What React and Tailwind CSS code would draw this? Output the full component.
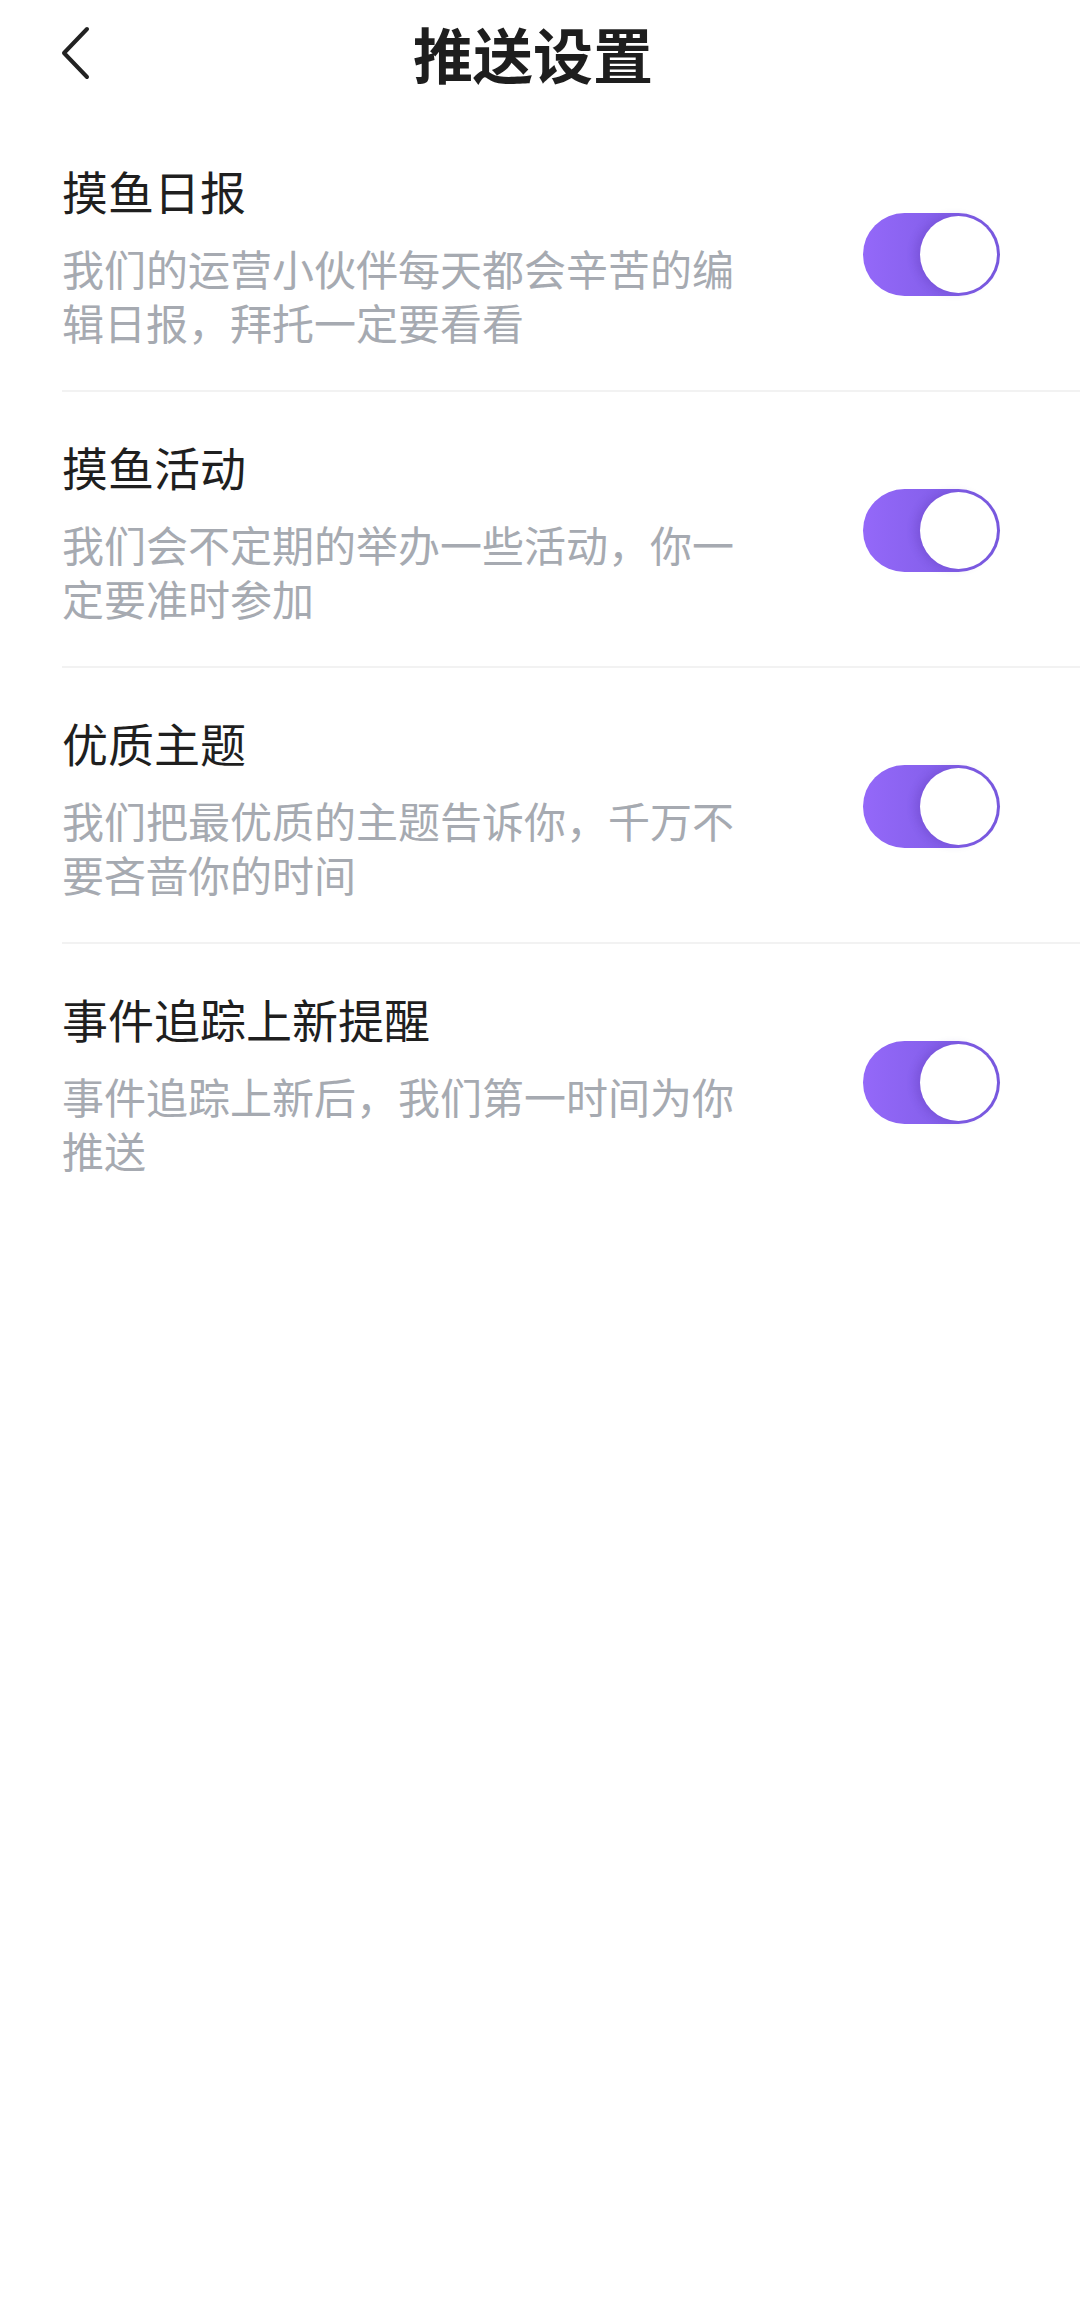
import { useState } from "react";

const items = [
  {
    id: "daily",
    title: "摸鱼日报",
    desc: "我们的运营小伙伴每天都会辛苦的编辑日报，拜托一定要看看",
  },
  {
    id: "events",
    title: "摸鱼活动",
    desc: "我们会不定期的举办一些活动，你一定要准时参加",
  },
  {
    id: "topics",
    title: "优质主题",
    desc: "我们把最优质的主题告诉你，千万不要吝啬你的时间",
  },
  {
    id: "tracking",
    title: "事件追踪上新提醒",
    desc: "事件追踪上新后，我们第一时间为你推送",
  },
];

function Toggle({ on, onChange }) {
  return (
    <button
      type="button"
      onClick={onChange}
      className={`flex items-center w-[137px] h-[83px] rounded-full p-[3px] shrink-0 transition ${
        on
          ? "bg-gradient-to-r from-[#9468f9] to-[#7859df] justify-end"
          : "bg-[#e5e7eb] justify-start"
      }`}
    >
      <span className="block w-[77px] h-[77px] rounded-full bg-white shadow-[-5px_0_8px_rgba(60,30,140,0.18)]" />
    </button>
  );
}

export default function App() {
  const [settings, setSettings] = useState({
    daily: true,
    events: true,
    topics: true,
    tracking: true,
  });

  const toggle = (id) => setSettings({ ...settings, [id]: !settings[id] });

  return (
    <div
      className="min-h-[2314px] w-[1080px] bg-white"
      style={{ fontFamily: '"Noto Sans CJK SC", "Noto Sans", sans-serif' }}
    >
      {/* Header */}
      <div className="relative h-[112px] pb-[7px] flex items-center justify-center">
        <button type="button" className="absolute left-[52px] top-[18px] p-2">
          <svg width="36" height="58" viewBox="0 0 36 58" fill="none">
            <path
              d="M27 3 L4 27 L27 51"
              stroke="#222"
              strokeWidth="4"
              strokeLinecap="round"
              strokeLinejoin="round"
            />
          </svg>
        </button>
        <h1 className="text-[60px] leading-none font-bold text-[#1e1e1e] -ml-[14px]">
          推送设置
        </h1>
      </div>

      {/* Settings list */}
      <div className="mt-[4px] pl-[62px]">
        {items.map((item, i) => (
          <div
            key={item.id}
            className={i < items.length - 1 ? "border-b-2 border-[#f2f2f2]" : ""}
          >
            <div className="flex items-center justify-between pt-[44px] pb-[41px] pr-[80px]">
              <div className="w-[690px]">
                <div className="text-[46px] leading-[60px] text-[#1f1f1f]">
                  {item.title}
                </div>
                <div className="mt-[21px] text-[42px] leading-[54px] text-[#a6aab1]">
                  {item.desc}
                </div>
              </div>
              <Toggle on={settings[item.id]} onChange={() => toggle(item.id)} />
            </div>
          </div>
        ))}
      </div>
    </div>
  );
}
